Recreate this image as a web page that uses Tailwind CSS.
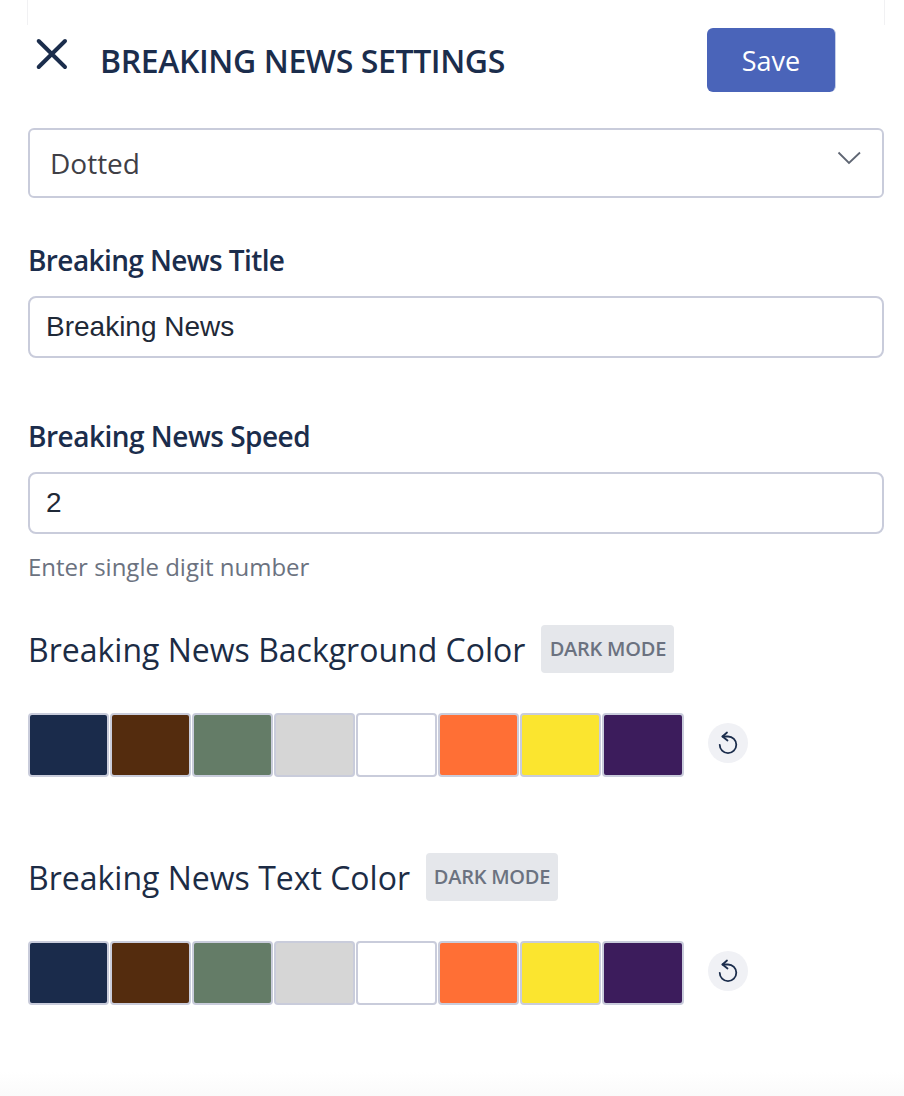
<!DOCTYPE html>
<html><head><script src="https://cdn.jsdelivr.net/npm/@tailwindcss/browser@4"></script></head>
<body class="bg-white">
<div class="relative w-[904px] h-[1096px] overflow-hidden bg-white font-['Open_Sans',sans-serif]">
  <div class="absolute left-[27px] top-0 w-[858px] h-[25px] border-x border-[#f1f1f3]"></div>
  <div class="absolute left-0 bottom-0 w-full h-[24px] bg-gradient-to-b from-white to-[#fafafa]"></div>
  <div class="relative pl-7 pr-5 pt-7">
    <div class="flex items-start h-16 w-[808px]">
      <svg class="w-[48px] h-[48px] -mt-[3px] shrink-0" viewBox="0 0 48 48" fill="none" stroke="#1b2d4c" stroke-width="4" stroke-linecap="round"><path d="M10.700 16 37 42M37 16 10.700 42"/></svg>
      <h1 class="ml-6 mt-[10px] text-[32px] leading-[46px] font-semibold tracking-[-0.4px] text-[#1b2d4c] whitespace-nowrap flex-1">BREAKING NEWS SETTINGS</h1>
      <button class="w-[129px] h-16 pt-px rounded-md bg-[#4a64b9] border-r border-[#c5cfe8] text-white text-[27px] leading-none">Save</button>
    </div>
    <div class="mt-9 h-[70px] rounded-md border-2 border-[#c9ccdb] flex items-center justify-between pl-[20px] pr-[20px] text-[28px] text-[#3f3f46]">
      <span>Dotted</span>
      <svg class="w-[26px] h-[16px] -mt-[10px]" viewBox="0 0 26 16" fill="none" stroke="#5f6673" stroke-width="1.8"><path d="M2.500 2.500 13 13 24 2.500"/></svg>
    </div>
    <label class="block mt-[40px] text-[28px] leading-[44px] font-semibold tracking-[-0.6px] text-[#1b2d4c]">Breaking News Title</label>
    <div class="mt-[14px] h-[62px] rounded-lg border-2 border-[#c9ccdb] flex items-center pl-4 text-[28px] text-[#1f2937] font-['Liberation_Sans',sans-serif]">Breaking News</div>
    <label class="block mt-[56px] text-[28px] leading-[44px] font-semibold tracking-[-0.5px] text-[#1b2d4c]">Breaking News Speed</label>
    <div class="mt-[14px] h-[62px] rounded-lg border-2 border-[#c9ccdb] flex items-center pl-4 text-[28px] text-[#1f2937] font-['Liberation_Sans',sans-serif]">2</div>
    <p class="mt-[15px] text-[24px] leading-[36px] text-[#6b7280]">Enter single digit number</p>

    <div class="mt-[40px] flex items-center h-12">
      <span class="pt-[2px] text-[32px] text-[#1c2c45] whitespace-nowrap">Breaking News Background Color</span>
      <span class="ml-4 h-12 w-[133px] justify-center rounded bg-[#e5e7eb] flex items-center text-[20px] font-semibold tracking-[-0.25px] text-[#6b7280] whitespace-nowrap">DARK MODE</span>
    </div>
    <div class="mt-10 flex items-center">
      <div class="flex gap-px">
        <div class="w-[81px] h-[64px] rounded border-2 border-[#c9ccdb] bg-[#1a2b4b]"></div>
        <div class="w-[81px] h-[64px] rounded border-2 border-[#c9ccdb] bg-[#542c0e]"></div>
        <div class="w-[81px] h-[64px] rounded border-2 border-[#c9ccdb] bg-[#647c67]"></div>
        <div class="w-[81px] h-[64px] rounded border-2 border-[#c9ccdb] bg-[#d6d6d6]"></div>
        <div class="w-[81px] h-[64px] rounded border-2 border-[#c9ccdb] bg-white"></div>
        <div class="w-[81px] h-[64px] rounded border-2 border-[#c9ccdb] bg-[#ff6f35]"></div>
        <div class="w-[81px] h-[64px] rounded border-2 border-[#c9ccdb] bg-[#fbe52f]"></div>
        <div class="w-[82px] h-[64px] rounded border-2 border-[#c9ccdb] bg-[#3c1c5c]"></div>
      </div>
      <div class="ml-6 -mt-1 w-10 h-10 rounded-full bg-[#f0f1f5] flex items-center justify-center">
        <svg class="w-6 h-6" viewBox="0 0 24 24" fill="none" stroke="#1b2d4c" stroke-width="1.800" stroke-linecap="round" stroke-linejoin="round"><path d="M6.500 5.500H12a8.300 8.300 0 1 1-8.300 8.300"/><path d="M11 1.500 6.500 5.500l5 4"/></svg>
      </div>
    </div>

    <div class="mt-[76px] flex items-center h-12">
      <span class="pt-[2px] text-[32px] text-[#1c2c45] whitespace-nowrap">Breaking News Text Color</span>
      <span class="ml-4 h-12 w-[132px] justify-center rounded bg-[#e5e7eb] flex items-center text-[20px] font-semibold tracking-[-0.25px] text-[#6b7280] whitespace-nowrap">DARK MODE</span>
    </div>
    <div class="mt-10 flex items-center">
      <div class="flex gap-px">
        <div class="w-[81px] h-[64px] rounded border-2 border-[#c9ccdb] bg-[#1a2b4b]"></div>
        <div class="w-[81px] h-[64px] rounded border-2 border-[#c9ccdb] bg-[#542c0e]"></div>
        <div class="w-[81px] h-[64px] rounded border-2 border-[#c9ccdb] bg-[#647c67]"></div>
        <div class="w-[81px] h-[64px] rounded border-2 border-[#c9ccdb] bg-[#d6d6d6]"></div>
        <div class="w-[81px] h-[64px] rounded border-2 border-[#c9ccdb] bg-white"></div>
        <div class="w-[81px] h-[64px] rounded border-2 border-[#c9ccdb] bg-[#ff6f35]"></div>
        <div class="w-[81px] h-[64px] rounded border-2 border-[#c9ccdb] bg-[#fbe52f]"></div>
        <div class="w-[82px] h-[64px] rounded border-2 border-[#c9ccdb] bg-[#3c1c5c]"></div>
      </div>
      <div class="ml-6 -mt-1 w-10 h-10 rounded-full bg-[#f0f1f5] flex items-center justify-center">
        <svg class="w-6 h-6" viewBox="0 0 24 24" fill="none" stroke="#1b2d4c" stroke-width="1.800" stroke-linecap="round" stroke-linejoin="round"><path d="M6.500 5.500H12a8.300 8.300 0 1 1-8.300 8.300"/><path d="M11 1.500 6.500 5.500l5 4"/></svg>
      </div>
    </div>
  </div>
</div>
</body></html>
